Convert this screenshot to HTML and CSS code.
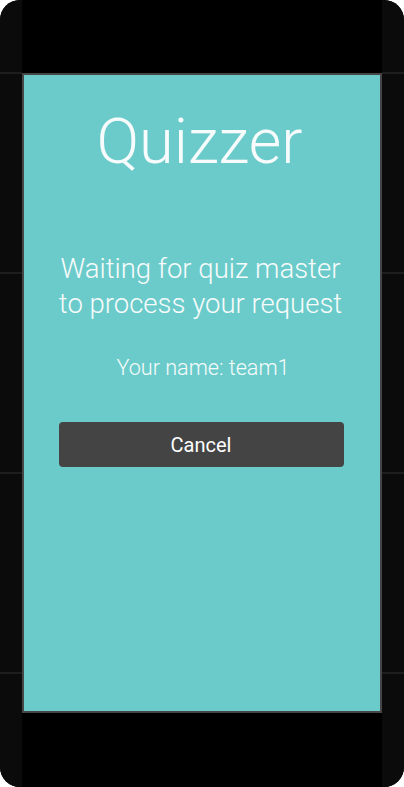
FILE: index.html
```html
<!DOCTYPE html>
<html lang="en">
<head>
<meta charset="utf-8">
<title>Quizzer</title>
<link rel="stylesheet" href="styles.css">
</head>
<body>
<div class="device">
  <div class="side"></div>
  <div class="screen">
    <div class="panel">
      <h1 class="title">Quizzer</h1>
      <p class="message">Waiting for quiz master<br>to process your request</p>
      <p class="name">Your name: team1</p>
      <button class="cancel" type="button">Cancel</button>
    </div>
  </div>
  <div class="side"></div>
</div>
</body>
</html>
```
FILE: styles.css
```css
html, body {
  margin: 0;
  padding: 0;
  background: #ffffff;
}

.device {
  width: 404px;
  height: 787px;
  border-radius: 20px;
  overflow: hidden;
  display: grid;
  grid-template-columns: 22px 1fr 22px;
  background: #000000;
}

.side {
  background-color: #0b0b0b;
  background-image: repeating-linear-gradient(
    to bottom,
    transparent 0px,
    transparent 72px,
    #1e1e1e 72px,
    #1e1e1e 74px,
    transparent 74px,
    transparent 200px
  );
}

.screen {
  background: #000000;
  padding-top: 73px;
}

.panel {
  box-sizing: border-box;
  height: 640px;
  background: #6bcbca;
  border: 2px solid #464646;
  display: flex;
  flex-direction: column;
  align-items: center;
  padding: 0 30px;
  color: #f7fbfb;
  font-family: Roboto, "Liberation Sans", sans-serif;
  text-align: center;
}

.title {
  margin: 30px 5px 0 0;
  font-size: 63px;
  font-weight: 300;
  line-height: 74px;
}

.message {
  margin: 72px 3px 0 0;
  font-size: 27.5px;
  font-weight: 300;
  line-height: 35px;
  white-space: nowrap;
}

.name {
  margin: 33px 0 0 2px;
  font-size: 21.6px;
  font-weight: 300;
  line-height: 28px;
}

.cancel {
  margin: 40px 2px 0 0;
  width: 285px;
  height: 45px;
  border: none;
  border-radius: 4px;
  background: #444444;
  color: #ffffff;
  font-family: Roboto, "Liberation Sans", sans-serif;
  font-size: 20px;
  font-weight: 400;
  padding: 0;
}
```
